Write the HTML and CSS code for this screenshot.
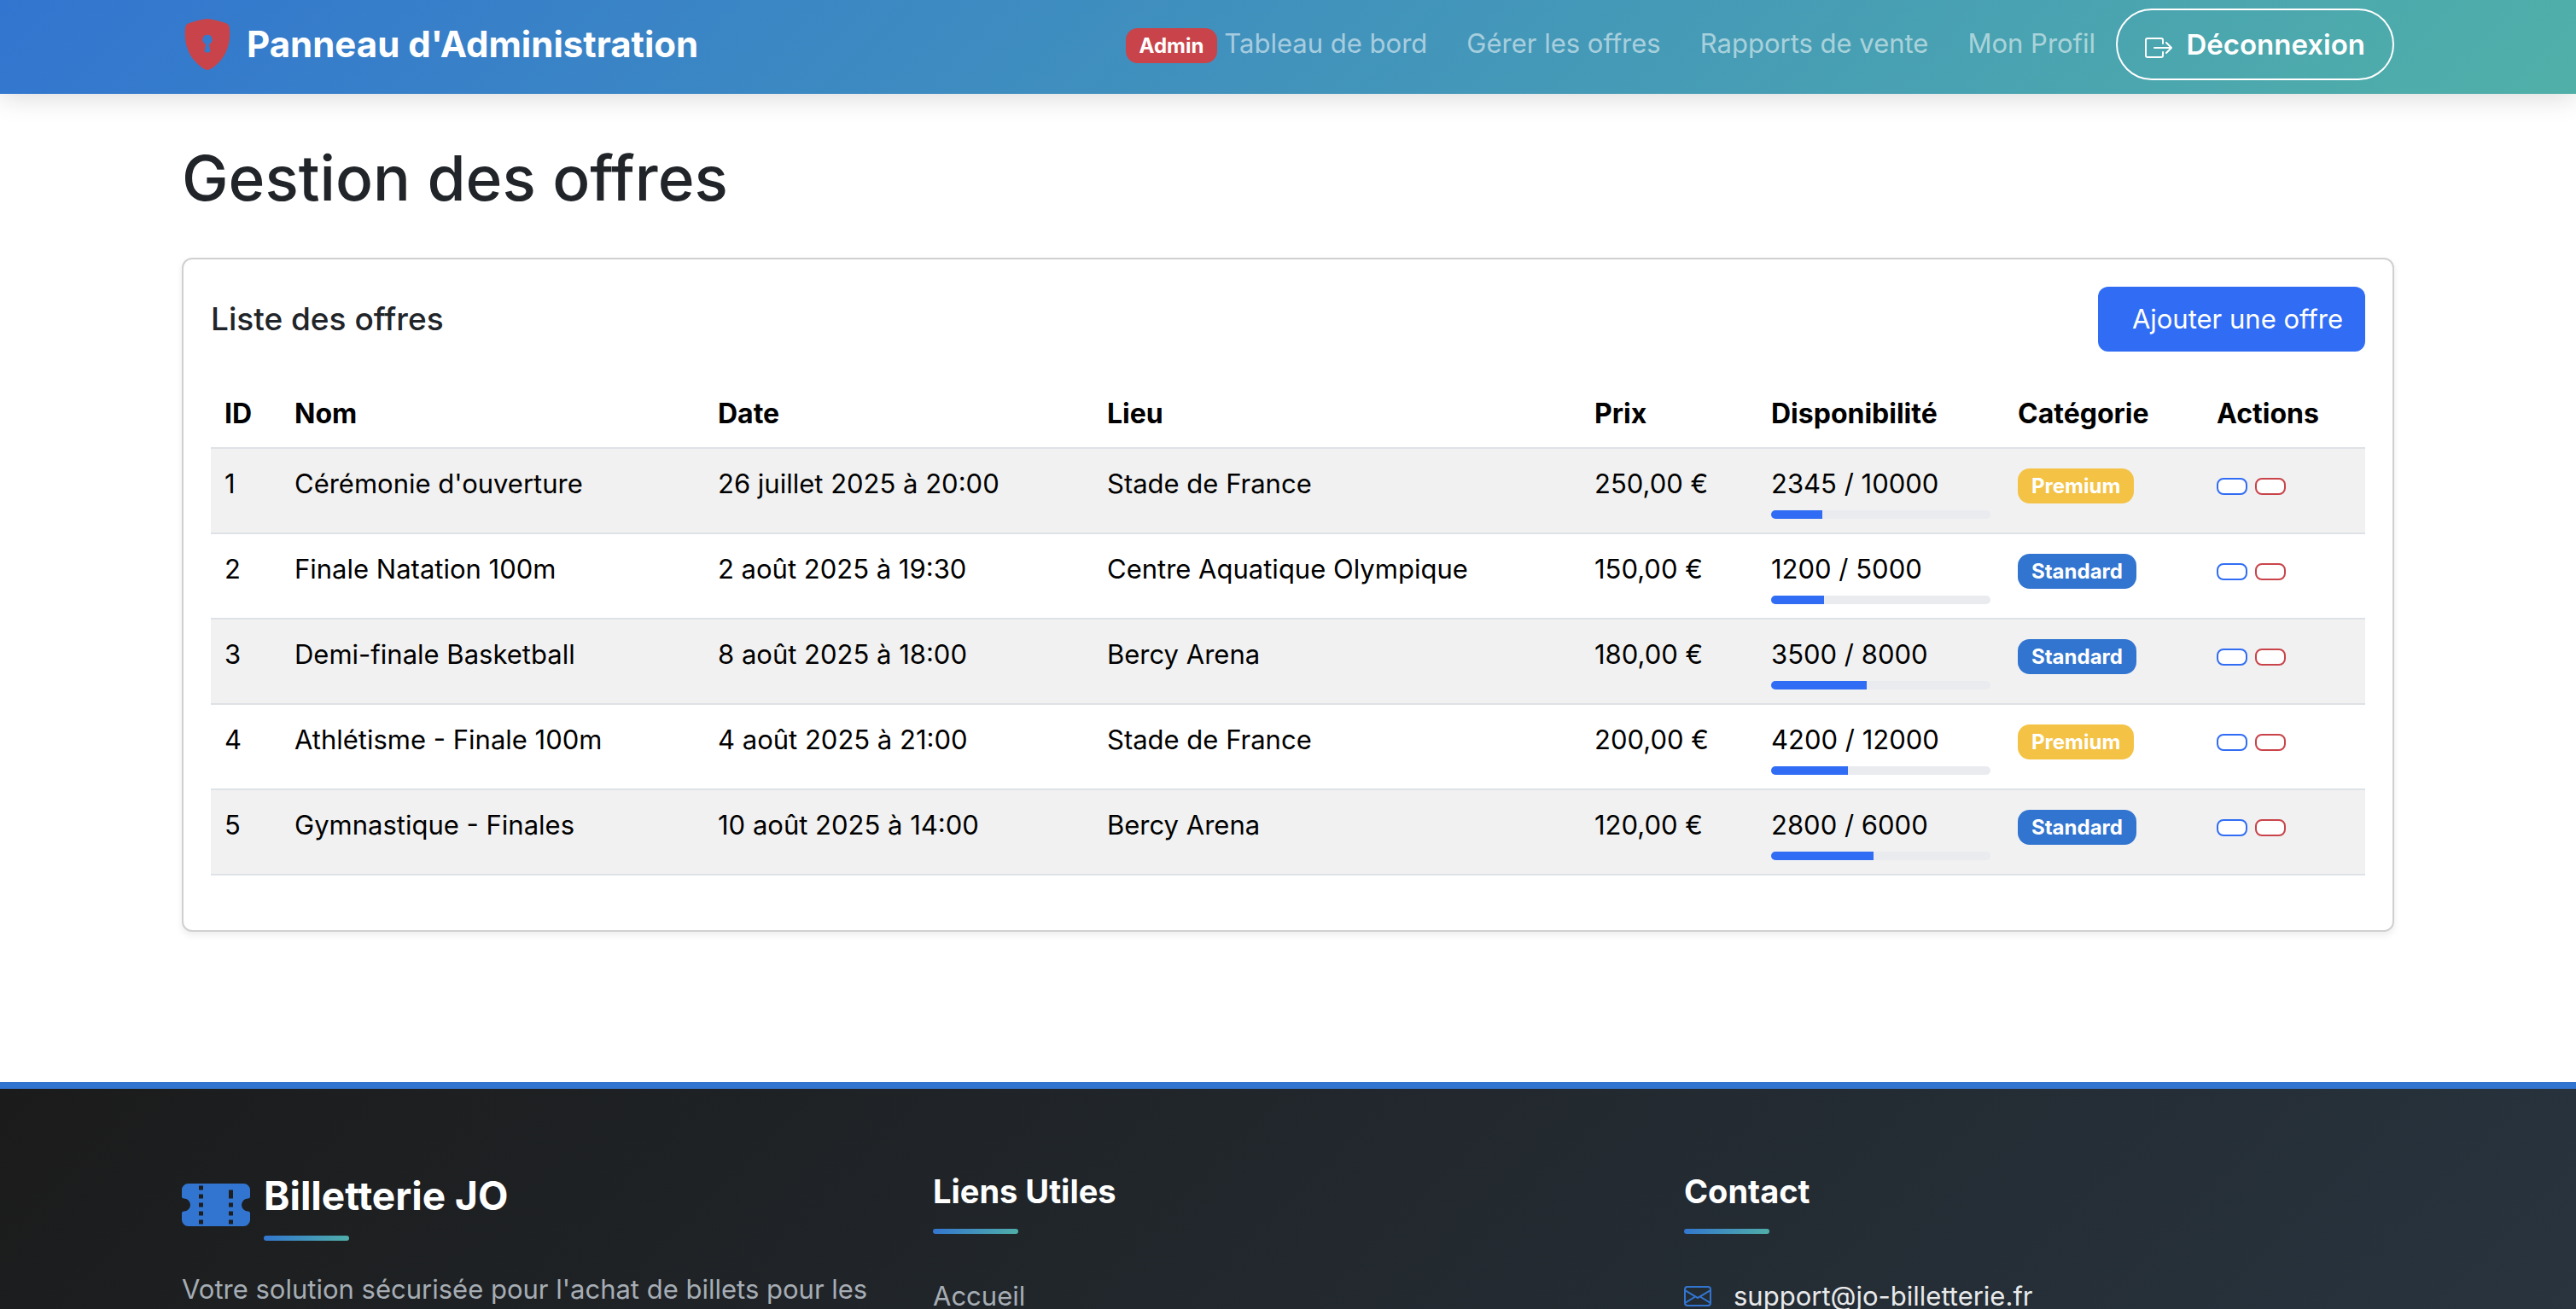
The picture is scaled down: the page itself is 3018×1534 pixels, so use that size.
FILE: index.html
```html
<!DOCTYPE html>
<html lang="fr">
<head>
<meta charset="utf-8">
<meta name="viewport" content="width=device-width, initial-scale=1">
<title>Gestion des offres - Panneau d'Administration</title>
<link rel="stylesheet" href="styles.css">
</head>
<body>
<header class="navbar">
  <div class="container navbar-inner">
    <a class="brand" href="#">
      <svg class="brand-icon" viewBox="0 0 16 16" fill="currentColor" aria-hidden="true"><path fill-rule="evenodd" d="M8 0c-.69 0-1.843.265-2.928.56-1.11.3-2.229.655-2.887.87a1.54 1.54 0 0 0-1.044 1.262c-.596 4.477.787 7.795 2.465 9.99a11.777 11.777 0 0 0 2.517 2.453c.386.273.744.482 1.048.625.28.132.581.24.829.24s.548-.108.829-.24a7.159 7.159 0 0 0 1.048-.625 11.775 11.775 0 0 0 2.517-2.453c1.678-2.195 3.061-5.513 2.465-9.99a1.541 1.541 0 0 0-1.044-1.263 62.467 62.467 0 0 0-2.887-.87C9.843.266 8.69 0 8 0zm0 5a1.5 1.5 0 0 1 .5 2.915l.385 1.99a.5.5 0 0 1-.491.595h-.788a.5.5 0 0 1-.49-.595l.384-1.99A1.5 1.5 0 0 1 8 5z"/></svg>
      Panneau d'Administration
    </a>
    <nav class="nav-menu">
      <div class="nav-first">
        <span class="badge badge-danger">Admin</span>
        <a class="nav-link" href="#">Tableau de bord</a>
      </div>
      <a class="nav-link" href="#">Gérer les offres</a>
      <a class="nav-link" href="#">Rapports de vente</a>
      <a class="nav-link" href="#">Mon Profil</a>
      <button class="logout" type="button">
        <svg class="icon logout-icon" viewBox="0 0 16 16" fill="currentColor" aria-hidden="true"><path fill-rule="evenodd" d="M10 12.5a.5.5 0 0 1-.5.5h-8a.5.5 0 0 1-.5-.5v-9a.5.5 0 0 1 .5-.5h8a.5.5 0 0 1 .5.5v2a.5.5 0 0 0 1 0v-2A1.5 1.5 0 0 0 9.500 2h-8A1.500 1.500 0 0 0 0 3.500v9A1.500 1.500 0 0 0 1.500 14h8a1.500 1.500 0 0 0 1.500-1.500v-2a.5.5 0 0 0-1 0v2z"/><path fill-rule="evenodd" d="M15.854 8.354a.5.5 0 0 0 0-.708l-3-3a.5.5 0 0 0-.708.708L14.293 7.500H5.500a.5.5 0 0 0 0 1h8.793l-2.147 2.146a.5.5 0 0 0 .708.708l3-3z"/></svg>
        Déconnexion
      </button>
    </nav>
  </div>
</header>

<main class="container main">
  <h1 class="page-title">Gestion des offres</h1>
  <section class="card">
    <div class="card-head">
      <h2 class="card-title">Liste des offres</h2>
      <button class="btn-primary" type="button">Ajouter une offre</button>
    </div>
    <table class="offers">
      <colgroup>
        <col class="col-id"><col class="col-name"><col class="col-date"><col class="col-place"><col class="col-price"><col class="col-stock"><col class="col-category"><col class="col-actions">
      </colgroup>
      <thead>
        <tr><th scope="col">ID</th><th scope="col">Nom</th><th scope="col">Date</th><th scope="col">Lieu</th><th scope="col">Prix</th><th scope="col">Disponibilité</th><th scope="col">Catégorie</th><th scope="col">Actions</th></tr>
      </thead>
      <tbody>
        <tr>
          <td>1</td><td>Cérémonie d'ouverture</td><td>26 juillet 2025 à 20:00</td><td>Stade de France</td><td>250,00 €</td>
          <td>2345 / 10000<div class="progress"><div class="progress-bar" style="width: 23.45%"></div></div></td>
          <td><span class="badge badge-warning">Premium</span></td>
          <td><button class="btn-mini btn-edit" type="button" aria-label="Modifier"></button> <button class="btn-mini btn-delete" type="button" aria-label="Supprimer"></button></td>
        </tr>
        <tr>
          <td>2</td><td>Finale Natation 100m</td><td>2 août 2025 à 19:30</td><td>Centre Aquatique Olympique</td><td>150,00 €</td>
          <td>1200 / 5000<div class="progress"><div class="progress-bar" style="width: 24%"></div></div></td>
          <td><span class="badge badge-primary">Standard</span></td>
          <td><button class="btn-mini btn-edit" type="button" aria-label="Modifier"></button> <button class="btn-mini btn-delete" type="button" aria-label="Supprimer"></button></td>
        </tr>
        <tr>
          <td>3</td><td>Demi-finale Basketball</td><td>8 août 2025 à 18:00</td><td>Bercy Arena</td><td>180,00 €</td>
          <td>3500 / 8000<div class="progress"><div class="progress-bar" style="width: 43.75%"></div></div></td>
          <td><span class="badge badge-primary">Standard</span></td>
          <td><button class="btn-mini btn-edit" type="button" aria-label="Modifier"></button> <button class="btn-mini btn-delete" type="button" aria-label="Supprimer"></button></td>
        </tr>
        <tr>
          <td>4</td><td>Athlétisme - Finale 100m</td><td>4 août 2025 à 21:00</td><td>Stade de France</td><td>200,00 €</td>
          <td>4200 / 12000<div class="progress"><div class="progress-bar" style="width: 35%"></div></div></td>
          <td><span class="badge badge-warning">Premium</span></td>
          <td><button class="btn-mini btn-edit" type="button" aria-label="Modifier"></button> <button class="btn-mini btn-delete" type="button" aria-label="Supprimer"></button></td>
        </tr>
        <tr>
          <td>5</td><td>Gymnastique - Finales</td><td>10 août 2025 à 14:00</td><td>Bercy Arena</td><td>120,00 €</td>
          <td>2800 / 6000<div class="progress"><div class="progress-bar" style="width: 46.67%"></div></div></td>
          <td><span class="badge badge-primary">Standard</span></td>
          <td><button class="btn-mini btn-edit" type="button" aria-label="Modifier"></button> <button class="btn-mini btn-delete" type="button" aria-label="Supprimer"></button></td>
        </tr>
      </tbody>
    </table>
  </section>
</main>

<footer class="footer">
  <div class="container footer-grid">
    <section>
      <div class="footer-brand">
        <svg class="footer-logo" viewBox="0 0 16 16" fill="currentColor" aria-hidden="true"><path fill-rule="evenodd" d="M0 4.500A1.500 1.500 0 0 1 1.500 3h13A1.500 1.500 0 0 1 16 4.500V6a.5.5 0 0 1-.5.5 1.500 1.500 0 0 0 0 3 .5.5 0 0 1 .5.5v1.500a1.500 1.500 0 0 1-1.500 1.500h-13A1.500 1.500 0 0 1 0 11.500V10a.5.5 0 0 1 .5-.5 1.500 1.500 0 1 0 0-3A.5.5 0 0 1 0 6zM4 3.500v1h1v-1zM4 5.500v1h1v-1zM4 7.500v1h1v-1zM4 9.500v1h1v-1zM4 11.500v1h1v-1zM11 4.500v2h1v-2zM11 7.500v1h1v-1zM11 9.500v1h1v-1zM11 11.500v1h1v-1z"/></svg>
        <h2 class="footer-name">Billetterie JO</h2>
      </div>
      <p class="footer-text">Votre solution sécurisée pour l'achat de billets pour les</p>
    </section>
    <section>
      <h3 class="footer-title">Liens Utiles</h3>
      <ul class="footer-list"><li><a class="footer-link" href="#">Accueil</a></li></ul>
    </section>
    <section>
      <h3 class="footer-title">Contact</h3>
      <ul class="footer-list">
        <li class="contact-item">
          <svg class="icon contact-icon" viewBox="0 0 16 16" fill="currentColor" aria-hidden="true"><path d="M0 4a2 2 0 0 1 2-2h12a2 2 0 0 1 2 2v8a2 2 0 0 1-2 2H2a2 2 0 0 1-2-2V4Zm2-1a1 1 0 0 0-1 1v.217l7 4.200 7-4.200V4a1 1 0 0 0-1-1H2Zm13 2.383-4.708 2.825L15 11.105V5.383Zm-.034 6.876-5.640-3.471L8 9.583l-1.326-.795-5.640 3.470A1 1 0 0 0 2 13h12a1 1 0 0 0 .966-.741ZM1 11.105l4.708-2.897L1 5.383v5.722Z"/></svg>
          <a class="contact-link" href="mailto:support@jo-billetterie.fr">support@jo-billetterie.fr</a>
        </li>
      </ul>
    </section>
  </div>
</footer>
</body>
</html>
```
FILE: styles.css
```css
:root {
  --blue: #3275d0;
  --teal: #50b0a8;
  --primary: #316df4;
  --danger: #c9444a;
  --warning: #f4c244;
  --line: #dee2e6;
  --accent: linear-gradient(135deg, var(--blue), var(--teal));
}

* {
  box-sizing: border-box;
}

body {
  margin: 0;
  font-family: Inter, "Liberation Sans", sans-serif;
  font-size: 31px;
  line-height: 48px;
  color: #212529;
  background: #fff;
}

h1, h2, h3, p, ul {
  margin: 0;
}

button {
  font: inherit;
  cursor: pointer;
}

a {
  text-decoration: none;
}

.container {
  width: 100%;
  max-width: 2640px;
  margin: 0 auto;
  padding: 0 24px;
}

.icon {
  width: 32px;
  height: 32px;
  flex: none;
}

/* Navigation */
.navbar {
  background: var(--accent);
  box-shadow: 0 4px 30px rgba(0, 0, 0, 0.15);
}

.navbar-inner {
  display: flex;
  align-items: center;
  justify-content: space-between;
  min-height: 110px;
  padding-bottom: 6px;
}

.brand {
  display: flex;
  align-items: center;
  gap: 16px;
  font-size: 42px;
  font-weight: 700;
  color: #fff;
}

.brand-icon {
  width: 60px;
  height: 60px;
  color: var(--danger);
}

.nav-menu {
  display: flex;
  align-items: center;
  gap: 46px;
}

.nav-first {
  display: flex;
  align-items: baseline;
  gap: 8px;
}

.nav-link {
  padding-bottom: 3px;
  color: rgba(255, 255, 255, 0.55);
}

.logout {
  margin-left: -22px;
  padding: 16px 32px;
  border: 2px solid #fff;
  border-radius: 50px;
  background: transparent;
  color: #fff;
  font-size: 33px;
  font-weight: 600;
}

.logout-icon {
  margin-right: 8px;
  vertical-align: -8px;
}

.badge {
  display: inline-block;
  padding: 8px 16px;
  border-radius: 14px;
  font-size: 24px;
  font-weight: 700;
  line-height: 25px;
  color: #fff;
}

.badge-danger { background: var(--danger); }
.badge-warning { background: var(--warning); }
.badge-primary { background: var(--blue); }

/* Offers */
.main {
  padding-top: 48px;
  padding-bottom: 176px;
}

.page-title {
  margin-bottom: 42px;
  font-size: 73px;
  font-weight: 500;
  line-height: 102px;
}

.card {
  padding: 32px;
  border: 2px solid #d0d0d1;
  border-radius: 12px;
  background: #fff;
  box-shadow: 0 4px 8px rgba(0, 0, 0, 0.075);
}

.card-head {
  display: flex;
  align-items: center;
  justify-content: space-between;
  margin-bottom: 32px;
}

.card-title {
  font-size: 37px;
  font-weight: 500;
}

.btn-primary {
  padding: 14px 26px 14px 40px;
  border: 0;
  border-radius: 12px;
  background: var(--primary);
  color: #fff;
}

.offers {
  width: 100%;
  margin-bottom: 32px;
  border-collapse: collapse;
  table-layout: fixed;
  color: #000;
}

.col-id { width: 82px; }
.col-name { width: 496px; }
.col-date { width: 456px; }
.col-place { width: 571px; }
.col-price { width: 207px; }
.col-stock { width: 289px; }
.col-category { width: 233px; }
.col-actions { width: 190px; }

.offers tr {
  border-bottom: 2px solid var(--line);
}

.offers th,
.offers td {
  padding: 17px 16px 15px;
  text-align: left;
  vertical-align: top;
  white-space: nowrap;
}

.offers th {
  font-size: 32px;
  font-weight: 700;
}

.offers tbody tr:nth-child(odd) {
  background: #f1f1f1;
}

.progress {
  height: 10px;
  margin: 7px 0 1px;
  overflow: hidden;
  border-radius: 5px;
  background: #e9ebef;
}

.progress-bar {
  height: 100%;
  background: var(--primary);
}

.btn-mini {
  width: 36px;
  height: 20px;
  padding: 0;
  border: 2px solid;
  border-radius: 8px;
  background: #fff;
  vertical-align: middle;
}

.btn-edit { border-color: var(--primary); }
.btn-delete { border-color: var(--danger); }

/* Footer */
.footer {
  padding: 96px 0 700px;
  border-top: 8px solid var(--blue);
  background: linear-gradient(135deg, #1b1b1b, #2b3946);
}

.footer-grid {
  display: grid;
  grid-template-columns: repeat(3, 1fr);
  gap: 48px;
  line-height: 50px;
}

.footer-brand {
  display: flex;
  gap: 16px;
  margin-bottom: 32px;
}

.footer-logo {
  width: 80px;
  height: 80px;
  color: var(--blue);
}

.footer-name,
.footer-title {
  display: flex;
  flex-direction: column;
  font-weight: 700;
  color: #fff;
}

.footer-name {
  gap: 18px;
  font-size: 46px;
  line-height: 58px;
}

.footer-title {
  gap: 20px;
  margin-bottom: 48px;
  font-size: 38px;
  line-height: 48px;
}

.footer-name::after,
.footer-title::after {
  content: "";
  width: 100px;
  height: 6px;
  border-radius: 4px;
  background: var(--accent);
}

.footer-text,
.footer-link {
  color: #a6adb4;
}

.footer-list {
  padding: 0;
  list-style: none;
}

.contact-item {
  display: flex;
  align-items: center;
  gap: 26px;
}

.contact-icon {
  color: var(--blue);
}

.contact-link {
  color: #e8e9ea;
}
```
